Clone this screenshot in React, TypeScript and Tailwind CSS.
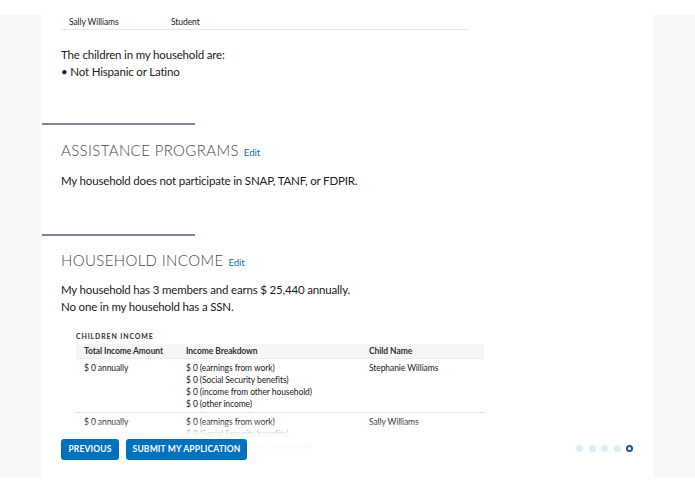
const BLUE = '#0071bc'

const breakdown = [
  '$ 0 (earnings from work)',
  '$ 0 (Social Security benefits)',
  '$ 0 (income from other household)',
  '$ 0 (other income)',
]

function Divider() {
  return <div className="h-[2px] w-[153px] bg-[#7d8799]" />
}

function Heading({ children }: { children: string }) {
  return (
    <h2 className="flex items-baseline pl-[19px] text-[15px] leading-[18px] font-light tracking-[0.025em] text-[#4a4a4a]">
      {children}
      <a className="ml-[5px] text-[9.5px] font-normal tracking-normal" style={{ color: BLUE }}>
        Edit
      </a>
    </h2>
  )
}

function IncomeRow({ name, lines }: { name: string; lines: string[] }) {
  return (
    <div className="grid grid-cols-[102px_183px_1fr] border-b border-[#e4e4e4] pb-[2px] pt-[3px] pl-[8px] text-[8.5px] leading-[12px] tracking-[-0.01em] text-[#212121]">
      <div>$ 0 annually</div>
      <div>
        {lines.map((l) => (
          <div key={l}>{l}</div>
        ))}
      </div>
      <div>{name}</div>
    </div>
  )
}

export default function App() {
  return (
    <div
      className="h-[494px] overflow-hidden bg-white pt-[15px]"
      style={{ fontFamily: 'Lato, "Noto Sans", sans-serif' }}
    >
      <div className="h-[463px] bg-[#f8f8f8] px-[42px]">
        <div className="relative h-full overflow-hidden bg-white text-[#212121]">
          {/* members table tail */}
          <div className="ml-[20px] flex h-[15px] w-[406px] items-end border-b border-[#e6e6e6] pl-[7px] text-[8.5px] leading-[13px] tracking-[-0.01em]">
            <span className="w-[102px]">Sally Williams</span>
            <span>Student</span>
          </div>

          <div className="mt-[16px] pl-[19px] text-[11.5px] leading-[17px] tracking-[-0.015em]">
            <p>The children in my household are:</p>
            <p>• Not Hispanic or Latino</p>
          </div>

          <div className="mt-[43px]">
            <Divider />
          </div>
          <div className="mt-[16px]">
            <Heading>ASSISTANCE PROGRAMS</Heading>
          </div>
          <p className="mt-[10px] pl-[19px] text-[11.5px] leading-[17px] tracking-[-0.015em]">
            My household does not participate in SNAP, TANF, or FDPIR.
          </p>

          <div className="mt-[45px]">
            <Divider />
          </div>
          <div className="mt-[15px]">
            <Heading>HOUSEHOLD INCOME</Heading>
          </div>
          <div className="mt-[9px] pl-[19px] text-[11.5px] leading-[17px] tracking-[-0.015em]">
            <p>My household has 3 members and earns $ 25,440 annually.</p>
            <p>No one in my household has a SSN.</p>
          </div>

          <div className="ml-[34px] mt-[16px] w-[408px]">
            <div className="text-[7px] font-bold leading-[10px] tracking-[0.12em] text-[#323232]">
              CHILDREN INCOME
            </div>
            <div className="mt-[3px] grid h-[15px] grid-cols-[102px_183px_1fr] items-center border-b border-[#ececec] bg-[#f6f6f6] pl-[8px] text-[8.5px] font-bold tracking-[-0.01em] text-[#323232]">
              <div>Total Income Amount</div>
              <div>Income Breakdown</div>
              <div>Child Name</div>
            </div>
            <IncomeRow name="Stephanie Williams" lines={breakdown} />
            <IncomeRow name="Sally Williams" lines={breakdown} />
          </div>

          {/* sticky footer */}
          <div className="absolute bottom-0 left-0 right-0 flex h-[58px] items-start justify-between bg-linear-to-b from-white/0 via-white/95 via-[25%] to-white pl-[19px] pr-[20px] pt-[19px]">
            <div className="flex gap-[7px]">
              <button
                className="h-[21px] w-[58px] whitespace-nowrap rounded-[3px] text-[8.5px] font-bold tracking-[0.02em] text-white"
                style={{ backgroundColor: BLUE }}
              >
                PREVIOUS
              </button>
              <button
                className="h-[21px] w-[121px] whitespace-nowrap rounded-[3px] text-[8.5px] font-bold tracking-[0.02em] text-white"
                style={{ backgroundColor: BLUE }}
              >
                SUBMIT MY APPLICATION
              </button>
            </div>
            <div className="mt-[6px] flex items-center gap-[5.5px]">
              <span className="h-[7px] w-[7px] rounded-full bg-[#d9edf5]" />
              <span className="h-[7px] w-[7px] rounded-full bg-[#d9edf5]" />
              <span className="h-[7px] w-[7px] rounded-full bg-[#d9edf5]" />
              <span className="h-[7px] w-[7px] rounded-full bg-[#d9edf5]" />
              <span className="h-[7px] w-[7px] rounded-full border-2 border-[#205493] bg-white" />
            </div>
          </div>
        </div>
      </div>
    </div>
  )
}
